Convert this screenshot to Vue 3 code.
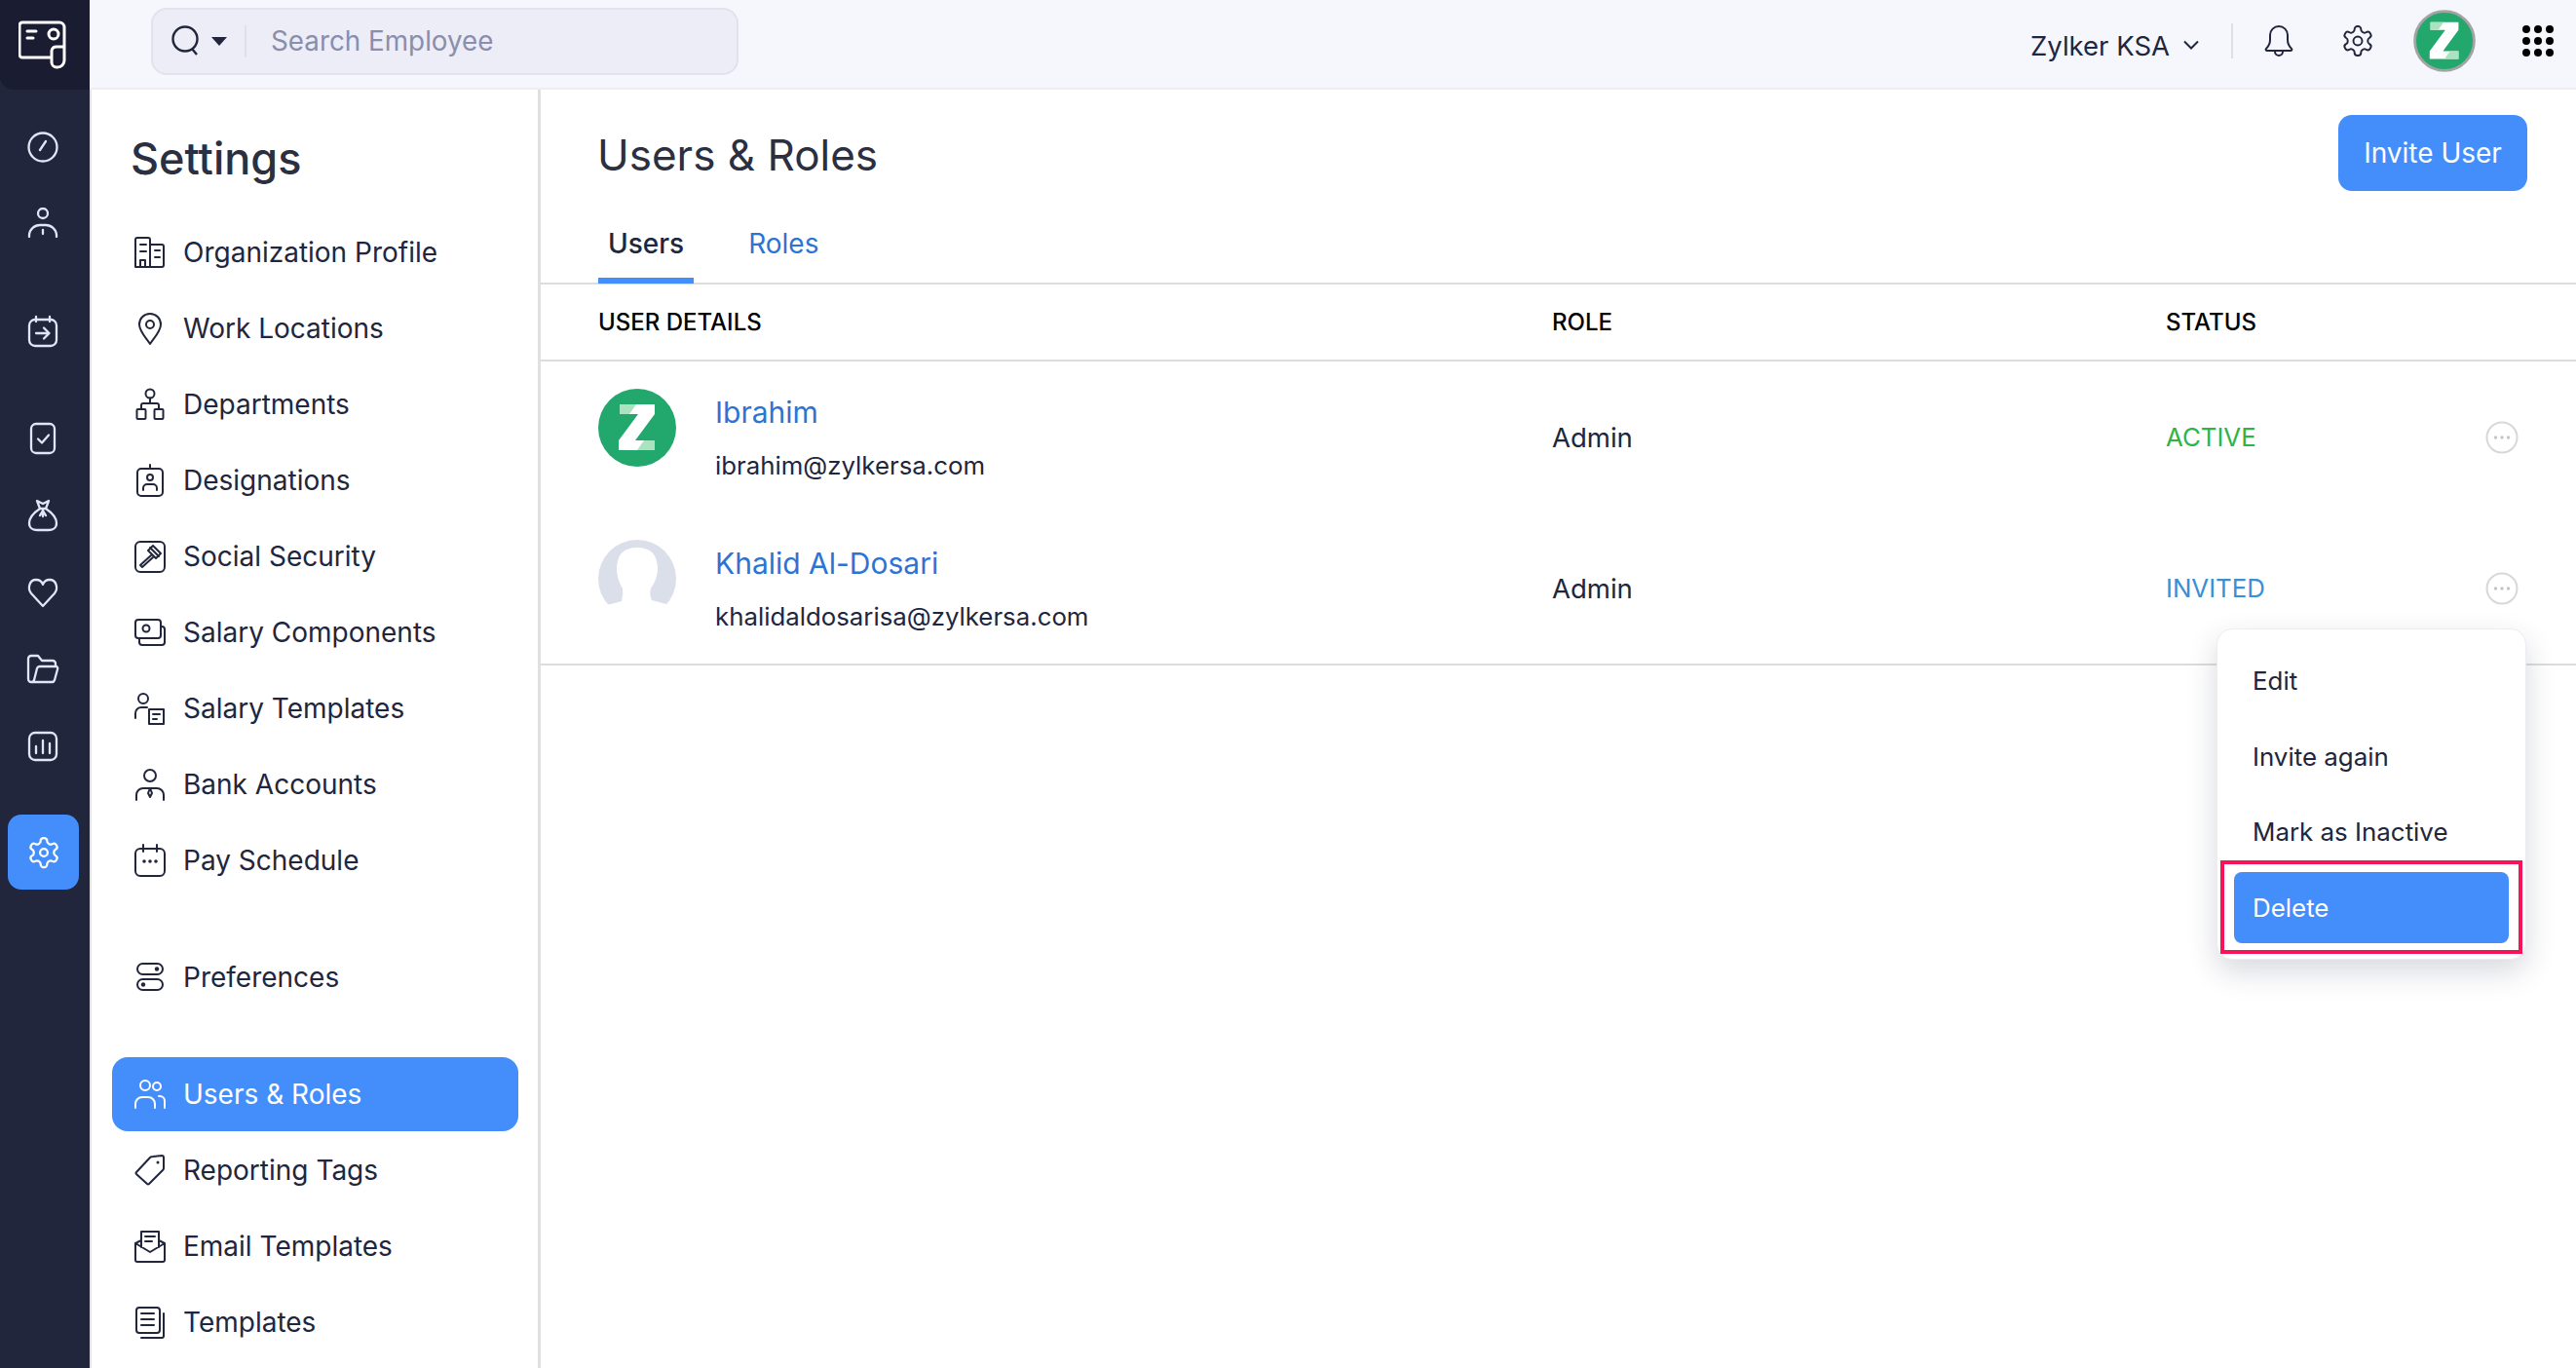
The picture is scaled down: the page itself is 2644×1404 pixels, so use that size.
<script setup>
const railGroups = [
  [
    { id: 'home', icon: '<circle cx="17" cy="17" r="14.5"/><path d="M14 20l6-9"/>' },
    { id: 'people', icon: '<circle cx="17" cy="6" r="5"/><path d="M3 30v-2a11 11 0 0 1 11-10h6a11 11 0 0 1 11 10v2M17 23v4"/>' },
  ],
  [
    { id: 'checkin', icon: '<rect x="3" y="5" width="28" height="27" rx="6"/><path d="M10 2v5M24 2v5M10 19h13M18 13.5l5.500 5.500-5.500 5.500"/>' },
  ],
  [
    { id: 'tasks', icon: '<rect x="5" y="2" width="24" height="30" rx="5"/><path d="M12 17.500l4 4 7-8"/>' },
    { id: 'money', icon: '<path d="M11 2l6 3 6-3-3 8h-6zM14 10C8 14 3 20 3 25c0 5 4 7 8 7h12c4 0 8-2 8-7 0-5-5-11-11-15M17 11v7M14 17l3-5 3 5"/>' },
    { id: 'heart', icon: '<path d="M17 31L5 18C1 13 3 4 10 4c3 0 6 2 7 5 1-3 4-5 7-5 7 0 9 9 5 14z"/>' },
    { id: 'folder', icon: '<path d="M5 30a3 3 0 0 1-3-3V6a3 3 0 0 1 3-3h7l4 5h11a3 3 0 0 1 3 3v2M5 30a3 3 0 0 0 3-2l3-12a3 3 0 0 1 3-2h16a2 2 0 0 1 2 3l-3 11a3 3 0 0 1-3 2z"/>' },
    { id: 'reports', icon: '<rect x="3" y="3" width="28" height="28" rx="6"/><path d="M10 24v-7M17 24V11M24 24v-10"/>' },
  ],
]

const settingsGroups = [
  [
    { label: 'Organization Profile', icon: '<path d="M2 32V4a2 2 0 0 1 2-2h11a2 2 0 0 1 2 2v5h12a2 2 0 0 1 2 2v19a2 2 0 0 1-2 2zM17 9v23M7 32v-7h5v7M7 9h6M7 16h6M22 15h5M22 22h5"/>' },
    { label: 'Work Locations', icon: '<path d="M17 2C10.500 2 6 7 6 13c0 7 7 14 11 20 4-6 11-13 11-20 0-6-4.500-11-11-11z"/><circle cx="17" cy="13" r="4"/>' },
    { label: 'Departments', icon: '<circle cx="17" cy="6" r="4.500"/><path d="M17 10.500V16M8 22v-4a2 2 0 0 1 2-2h14a2 2 0 0 1 2 2v4"/><rect x="3.500" y="22" width="9" height="10" rx="1"/><rect x="21.500" y="22" width="9" height="10" rx="1"/>' },
    { label: 'Designations', icon: '<rect x="4" y="5" width="26" height="28" rx="4"/><path d="M17 1v4M10 27v-2a4 4 0 0 1 4-4h6a4 4 0 0 1 4 4v2"/><circle cx="17" cy="14" r="3"/>' },
    { label: 'Social Security', icon: '<rect x="2" y="2" width="30" height="31" rx="5"/><path d="M15 11l5-5 8 8-5 5zM18 16l-11 10 2 2 11-10M17 8l9 9"/>' },
    { label: 'Salary Components', icon: '<rect x="2" y="4" width="26" height="19" rx="3"/><circle cx="13" cy="13" r="3.500"/><path d="M28 11h1a3 3 0 0 1 3 3v13a3 3 0 0 1-3 3H9a3 3 0 0 1-3-3v-4"/>' },
    { label: 'Salary Templates', icon: '<circle cx="10" cy="7" r="5"/><path d="M2 27v-5a6 6 0 0 1 6-6h6M20 23h7M20 28h4"/><rect x="16" y="18" width="15" height="15"/>' },
    { label: 'Bank Accounts', icon: '<circle cx="17" cy="8" r="6"/><path d="M3 33v-5a7 7 0 0 1 7-7h14a7 7 0 0 1 7 7v5M17 21l-2 5 2 4 2-4z"/>' },
    { label: 'Pay Schedule', icon: '<rect x="2" y="5" width="30" height="28" rx="5"/><path d="M10 1v7M24 1v7"/><g class="solid"><circle cx="11" cy="18" r="1.800"/><circle cx="17" cy="18" r="1.800"/><circle cx="23" cy="18" r="1.800"/></g>' },
  ],
  [
    { label: 'Preferences', icon: '<rect x="4" y="3" width="26" height="11" rx="5.500"/><rect x="4" y="19" width="26" height="11" rx="5.500"/><g class="solid"><circle cx="24" cy="8.500" r="2.200"/><circle cx="10" cy="24.500" r="2.200"/></g>' },
  ],
  [
    { label: 'Users & Roles', active: true, icon: '<circle cx="12" cy="8" r="5"/><circle cx="24" cy="9" r="4"/><path d="M2 31v-4a7 7 0 0 1 7-7h6a7 7 0 0 1 7 7v4M26 19h1a5 5 0 0 1 5 5v7"/>' },
    { label: 'Reporting Tags', icon: '<path d="M3 19L17 4q1-1 3-1l9-1q2 0 2 2v11q0 1-1 2L16 31q-1 1-2 0L3 21q-1-1 0-2z"/><circle class="solid" cx="25" cy="9" r="1.500"/>' },
    { label: 'Email Templates', icon: '<path d="M8 11L2 14v17a2 2 0 0 0 2 2h26a2 2 0 0 0 2-2V14l-6-3M2 14l15 9 15-9M8 18V2h18v16M12 7h10M12 12h7"/>' },
    { label: 'Templates', icon: '<rect x="3" y="2" width="24" height="26" rx="3"/><path d="M31 8v23a2 2 0 0 1-2 2H8M8 8h13M8 14h13M8 20h13"/>' },
  ],
]

const users = [
  { name: 'Ibrahim', email: 'ibrahim@zylkersa.com', role: 'Admin', status: 'ACTIVE', logo: true },
  { name: 'Khalid Al-Dosari', email: 'khalidaldosarisa@zylkersa.com', role: 'Admin', status: 'INVITED', logo: false },
]

const menuItems = ['Edit', 'Invite again', 'Mark as Inactive', 'Delete']

const gearPath = 'M12.220 2h-.440a2 2 0 0 0-2 2v.180a2 2 0 0 1-1 1.730l-.430.250a2 2 0 0 1-2 0l-.150-.080a2 2 0 0 0-2.730.730l-.220.380a2 2 0 0 0 .730 2.730l.150.100a2 2 0 0 1 1 1.720v.510a2 2 0 0 1-1 1.740l-.150.090a2 2 0 0 0-.730 2.730l.220.380a2 2 0 0 0 2.730.730l.150-.080a2 2 0 0 1 2 0l.430.250a2 2 0 0 1 1 1.730V20a2 2 0 0 0 2 2h.440a2 2 0 0 0 2-2v-.180a2 2 0 0 1 1-1.730l.430-.250a2 2 0 0 1 2 0l.150.080a2 2 0 0 0 2.730-.730l.220-.390a2 2 0 0 0-.730-2.730l-.150-.080a2 2 0 0 1-1-1.740v-.500a2 2 0 0 1 1-1.740l.150-.090a2 2 0 0 0 .730-2.730l-.220-.380a2 2 0 0 0-2.730-.730l-.150.080a2 2 0 0 1-2 0l-.430-.250a2 2 0 0 1-1-1.730V4a2 2 0 0 0-2-2z'
</script>

<template>
  <div class="page">
    <aside class="rail">
      <div class="logo">
        <svg width="50" height="50" viewBox="0 0 50 50" fill="none" stroke="#fff" stroke-width="3" stroke-linejoin="round" stroke-linecap="round">
          <path d="M34 38H4a3 3 0 0 1-3-3V5a3 3 0 0 1 3-3h38a5 5 0 0 1 5 5v34a7 7 0 0 1-7 7h-1a5 5 0 0 1-5-5V31a5 5 0 0 1 5-4h8" />
          <circle cx="36" cy="14" r="5" />
          <path d="M9 11h9M9 18h6" />
        </svg>
      </div>
      <div class="rail-groups">
        <div v-for="(group, i) in railGroups" :key="i" class="rail-group">
          <div v-for="item in group" :key="item.id" class="rail-item">
            <svg class="rail-icon" width="34" height="34" viewBox="0 0 34 34" v-html="item.icon"></svg>
          </div>
        </div>
        <div class="rail-active">
          <svg width="36" height="36" viewBox="0 0 24 24" fill="none" stroke="#fff" stroke-width="1.500">
            <path :d="gearPath" />
            <circle cx="12" cy="12" r="2.600" />
          </svg>
        </div>
      </div>
    </aside>

    <div class="body">
      <header class="topbar">
        <div class="search">
          <svg width="34" height="36" viewBox="0 0 34 36" fill="none" stroke="#21263c" stroke-width="2.400">
            <circle cx="16" cy="16" r="12.500" />
            <path d="M23 26l5 6" />
          </svg>
          <span class="caret"></span>
          <span class="search-sep"></span>
          <span class="placeholder">Search Employee</span>
        </div>
        <div class="topbar-right">
          <span class="org">Zylker KSA</span>
          <svg class="chevron" width="18" height="12" viewBox="0 0 18 12" fill="none" stroke="#21263c" stroke-width="2">
            <path d="M2 2.500l7 7 7-7" />
          </svg>
          <span class="top-sep"></span>
          <svg class="bell" width="30" height="34" viewBox="0 0 30 34" fill="none" stroke="#21263c" stroke-width="2">
            <path d="M2 25c3-3 4-5 4-9V11a9 9 0 0 1 18 0v5c0 4 1 6 4 9 1 1 0 2-1 2H3c-1 0-2-1-1-2zM11 28a4 4 0 0 0 8 0" />
          </svg>
          <svg class="gear" width="36" height="36" viewBox="0 0 24 24" fill="none" stroke="#21263c" stroke-width="1.300">
            <path :d="gearPath" />
            <circle cx="12" cy="12" r="3" />
          </svg>
          <svg class="top-avatar" width="64" height="64" viewBox="0 0 80 80">
            <circle cx="40" cy="40" r="38" fill="#22a86d" stroke="#a3a3a3" stroke-width="3.500" />
            <path fill="#fff" d="M22 16h36v10L38 53h20v10H21V53l20-27H22z" />
            <path fill="#a9e3c0" d="M22 16h17l-7 10H22zM58 63H40l7-10h11z" />
          </svg>
          <div class="apps">
            <i v-for="n in 9" :key="n"></i>
          </div>
        </div>
      </header>

      <div class="content">
        <nav class="settings">
          <h2>Settings</h2>
          <div v-for="(group, i) in settingsGroups" :key="i" class="settings-group">
            <a v-for="item in group" :key="item.label" class="settings-item" :class="{ selected: item.active }">
              <svg class="settings-icon" width="34" height="35" viewBox="0 0 34 35" v-html="item.icon"></svg>
              <span>{{ item.label }}</span>
            </a>
          </div>
        </nav>

        <main class="main">
          <div class="main-head">
            <h1>Users &amp; Roles</h1>
            <button class="invite">Invite User</button>
          </div>
          <div class="tabs">
            <span class="tab current">Users</span>
            <span class="tab">Roles</span>
          </div>
          <div class="row thead">
            <span>USER DETAILS</span>
            <span>ROLE</span>
            <span>STATUS</span>
          </div>
          <div class="tbody">
            <div v-for="user in users" :key="user.email" class="row user">
              <div class="user-cell">
                <svg v-if="user.logo" width="80" height="80" viewBox="0 0 80 80">
                  <circle cx="40" cy="40" r="40" fill="#22a86d" />
                  <path fill="#fff" d="M22 16h36v10L38 53h20v10H21V53l20-27H22z" />
                  <path fill="#a9e3c0" d="M22 16h17l-7 10H22zM58 63H40l7-10h11z" />
                </svg>
                <svg v-else width="80" height="80" viewBox="0 0 80 80">
                  <circle cx="40" cy="40" r="40" fill="#dbdfe9" />
                  <path fill="#fff" d="M0 80V68l13-2 11-3q2-7 1-13-6-10-6-20Q19 8 40 8t21 22q0 10-7 20-2 6 1 12l15 4 10 2v12z" />
                </svg>
                <div class="user-text">
                  <a class="user-name">{{ user.name }}</a>
                  <span class="user-email">{{ user.email }}</span>
                </div>
              </div>
              <span class="user-role">{{ user.role }}</span>
              <span class="user-status" :class="user.status.toLowerCase()">{{ user.status }}</span>
              <svg class="more" width="34" height="34" viewBox="0 0 34 34">
                <circle cx="17" cy="17" r="15.500" fill="none" stroke="#d8d8d8" stroke-width="2" />
                <g fill="#c4c4c4"><circle cx="10.500" cy="17" r="1.700" /><circle cx="17" cy="17" r="1.700" /><circle cx="23.500" cy="17" r="1.700" /></g>
              </svg>
            </div>
          </div>

          <div class="menu">
            <div v-for="label in menuItems" :key="label" class="menu-item" :class="{ hover: label === 'Delete' }">{{ label }}</div>
            <div class="annotation"></div>
          </div>
        </main>
      </div>
    </div>
  </div>
</template>

<style>
html,
body {
  margin: 0;
  background: #fff;
}
</style>

<style scoped>
.page {
  display: flex;
  width: 2644px;
  height: 1404px;
  overflow: hidden;
  font-family: Inter, "Noto Sans", sans-serif;
  color: #21263c;
  background: #fff;
}

.rail {
  flex: 0 0 92px;
  background: #21263c;
}

.logo {
  display: flex;
  align-items: center;
  justify-content: center;
  height: 92px;
  padding-right: 5px;
  box-sizing: border-box;
  background: #1a1c32;
  border-bottom-left-radius: 14px;
}

.rail-groups {
  display: flex;
  flex-direction: column;
  align-items: center;
  padding: 19px 3px 0 0;
}

.rail-group {
  display: flex;
  flex-direction: column;
  margin-bottom: 31px;
}

.rail-item {
  display: flex;
  align-items: center;
  justify-content: center;
  box-sizing: border-box;
  width: 73px;
  height: 79px;
  padding-right: 2px;
}

.rail-icon {
  fill: none;
  stroke: #dfe6f7;
  stroke-width: 2.300;
  stroke-linecap: round;
  stroke-linejoin: round;
}

.rail-active {
  display: flex;
  align-items: center;
  justify-content: center;
  width: 73px;
  height: 77px;
  border-radius: 14px;
  background: #448efb;
}

.body {
  flex: 1;
  min-width: 0;
  display: flex;
  flex-direction: column;
}

.topbar {
  flex: 0 0 92px;
  box-sizing: border-box;
  display: flex;
  align-items: center;
  justify-content: space-between;
  padding: 0 23px 6px 63px;
  background: #f6f7fd;
  border-bottom: 2px solid #eeeef1;
}

.search {
  display: flex;
  align-items: center;
  box-sizing: border-box;
  width: 603px;
  height: 69px;
  padding: 0 0 0 17px;
  border: 2px solid #e1e2ee;
  border-radius: 16px;
  background: #ecedf6;
}

.caret {
  width: 0;
  height: 0;
  margin-left: 9px;
  border-left: 8px solid transparent;
  border-right: 8px solid transparent;
  border-top: 9px solid #21263c;
}

.search-sep {
  width: 2px;
  height: 33px;
  margin: 0 25px 0 18px;
  background: #dfe0ea;
}

.placeholder {
  font-size: 27.800px;
  color: #8a8eac;
}

.topbar-right {
  display: flex;
  align-items: center;
}

.org {
  font-size: 27.500px;
  margin-right: 13px;
  margin-top: 10px;
}

.chevron {
  margin-top: 8px;
}

.top-sep {
  width: 2px;
  height: 36px;
  margin: 0 32px 0 32px;
  background: #dddfe6;
}

.gear {
  margin-left: 48px;
}

.top-avatar {
  margin-left: 39px;
}

.apps {
  display: grid;
  grid-template-columns: repeat(3, 8px);
  grid-auto-rows: 8px;
  gap: 4px;
  margin-left: 48px;
}

.apps i {
  border-radius: 50%;
  background: #000;
}

.content {
  flex: 1;
  display: flex;
  min-height: 0;
}

.settings {
  flex: 0 0 463px;
  box-sizing: border-box;
  padding: 44px 20px 0 21px;
  border-left: 2px solid #e4e4e8;
  border-right: 3px solid #e0e0e0;
}

.settings h2 {
  margin: 0 0 31px 19px;
  font-size: 45px;
  line-height: 54px;
  font-weight: 500;
  color: #2b2f3f;
}

.settings-group {
  display: flex;
  flex-direction: column;
  gap: 2px;
  margin-bottom: 44px;
}

.settings-item {
  display: flex;
  align-items: center;
  gap: 17px;
  height: 76px;
  padding-left: 22px;
  border-radius: 16px;
  font-size: 28px;
  color: #21263c;
}

.settings-item.selected {
  background: #448efb;
  color: #fff;
}

.settings-icon {
  flex: none;
  fill: none;
  stroke: currentColor;
  stroke-width: 2;
  stroke-linecap: round;
  stroke-linejoin: round;
}

.settings-icon :deep(.solid) {
  fill: currentColor;
  stroke: none;
}

.main {
  position: relative;
  flex: 1;
  min-width: 0;
}

.main-head {
  display: flex;
  align-items: center;
  justify-content: space-between;
  height: 130px;
  box-sizing: border-box;
  padding: 0 50px 0 58px;
}

.main-head h1 {
  margin: 3px 0 0;
  font-size: 44px;
  font-weight: 400;
  color: #2b2f3f;
}

.invite {
  width: 194px;
  height: 78px;
  border: 0;
  border-radius: 14px;
  background: #448efb;
  color: #fff;
  font: 400 28px Inter, sans-serif;
}

.tabs {
  display: flex;
  gap: 46px;
  height: 60px;
  padding: 8px 0 0 59px;
  border-bottom: 2px solid #dcdcdc;
}

.tab {
  position: relative;
  padding: 0 10px;
  font-size: 28px;
  line-height: 40px;
  color: #2c74d4;
}

.tab.current {
  font-weight: 500;
  color: #21263c;
}

.tab.current::after {
  content: "";
  position: absolute;
  left: 0;
  right: 0;
  bottom: -1px;
  height: 6px;
  background: #448efb;
}

.row {
  display: grid;
  grid-template-columns: 979px 630px 1fr;
  align-items: center;
  padding-left: 59px;
}

.thead {
  height: 77px;
  font-size: 24px;
  font-weight: 500;
  color: #000;
  border-bottom: 2px solid #dcdcdc;
}

.tbody {
  border-bottom: 2px solid #dcdcdc;
}

.user {
  position: relative;
  height: 155px;
}

.user-cell {
  align-self: start;
  display: flex;
  align-items: flex-start;
  gap: 40px;
  padding-top: 28px;
}

.user-text {
  display: flex;
  flex-direction: column;
  gap: 19px;
  padding-top: 6px;
}

.user-name {
  font-size: 30px;
  line-height: 36px;
  color: #2c74d4;
}

.user-email {
  font-size: 25.800px;
  line-height: 36px;
}

.user-role {
  font-size: 27.500px;
}

.user-status {
  font-size: 25.800px;
}

.active {
  color: #2fb344;
}

.invited {
  color: #3a8ed6;
}

.more {
  position: absolute;
  right: 59px;
  top: 61px;
}

.menu {
  position: absolute;
  top: 553px;
  right: 51px;
  box-sizing: border-box;
  width: 318px;
  height: 340px;
  padding: 13px 17px;
  border: 1px solid #ecedf3;
  border-radius: 16px;
  background: #fff;
  box-shadow: 0 12px 30px rgba(40, 44, 70, 0.18);
}

.menu-item {
  display: flex;
  align-items: center;
  height: 78px;
  padding-left: 19px;
  font-size: 25.900px;
  color: #21263c;
}

.menu-item:nth-child(3) {
  height: 76px;
}

.menu-item.hover {
  height: 73px;
  margin-top: 4px;
  border-radius: 8px;
  background: #448efb;
  color: #fff;
}

.annotation {
  position: absolute;
  left: 3px;
  right: 3px;
  top: 237px;
  height: 96px;
  border: 4px solid #f5135a;
  box-sizing: border-box;
  pointer-events: none;
}
</style>
